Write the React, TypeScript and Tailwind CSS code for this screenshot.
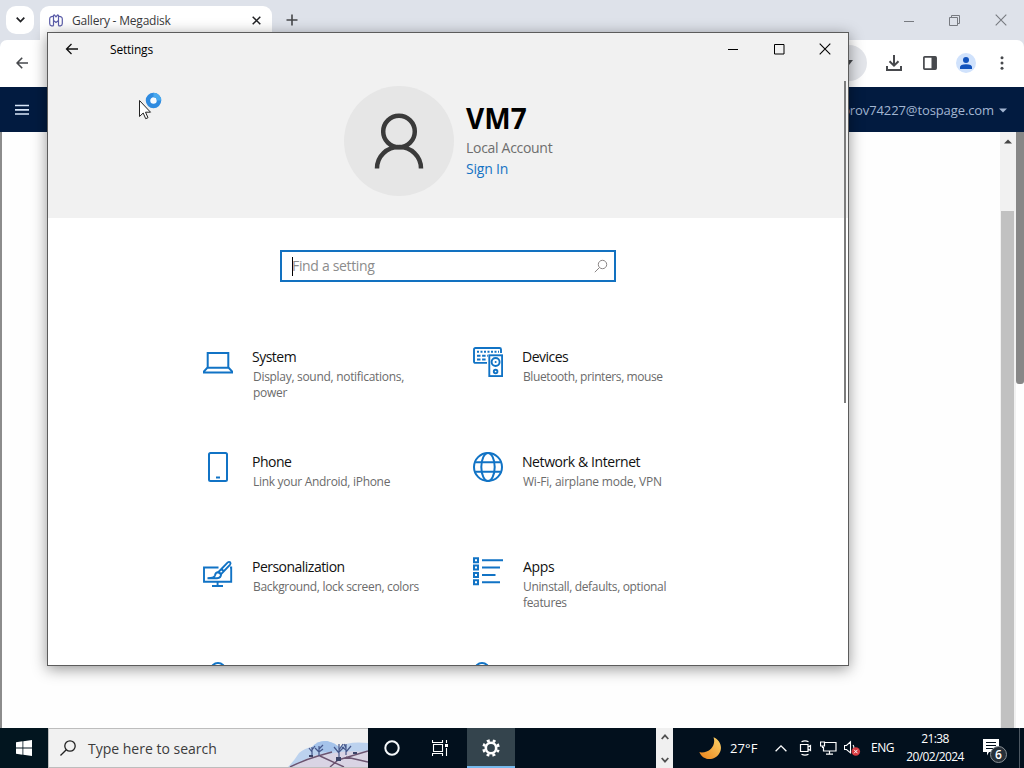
import React from 'react';

interface SettingItem {
    title: string;
    lines: string[];
    icon: React.ReactNode;
    titleClass: string;
    lineClass: string;
}

const Laptop = () => (
    <svg width="30" height="30" viewBox="0 0 30 30" fill="none" stroke="#1173c5" strokeWidth="2">
        <path d="M4.700 20.500V6h20.600v14.500M4.300 20.700h21.400L29 24.300v1.200H1v-1.200z" />
    </svg>
);

const Phone = () => (
    <svg width="30" height="30" viewBox="0 0 30 30" fill="none" stroke="#1173c5" strokeWidth="2">
        <rect x="6" y="1" width="18" height="28" rx="1.500" />
        <path d="M13 25.500h4" />
    </svg>
);

const Devices = () => (
    <svg width="30" height="30" viewBox="0 0 30 30" fill="none" stroke="#1173c5" strokeWidth="1.900">
        <path d="M14 15.900H2.500Q1 15.900 1 14.400V2.500Q1 1 2.500 1H26.500Q28 1 28 2.500V6" />
        <path d="M4 4.800h22" strokeDasharray="2 1.500" />
        <path d="M4 8.800h11M4 12.500h10" strokeDasharray="3.500 1.600" />
        <rect x="16.300" y="8.300" width="12.800" height="20.800" fill="#fff" />
        <circle cx="22.600" cy="15" r="4" />
        <circle cx="22.600" cy="24.500" r="1.800" />
        <circle cx="22.600" cy="15" r="1" fill="#1173c5" stroke="none" />
    </svg>
);

const Globe = () => (
    <svg width="30" height="30" viewBox="0 0 30 30" fill="none" stroke="#1173c5" strokeWidth="2">
        <circle cx="15" cy="15" r="14" />
        <ellipse cx="15" cy="15" rx="6.700" ry="14" />
        <path d="M2.200 10.200h25.600M2.200 19.800h25.600" />
    </svg>
);

const Brush = () => (
    <svg width="30" height="30" viewBox="0 0 30 30" fill="none" stroke="#1173c5" strokeWidth="1.900">
        <path d="M15.500 10.500H1v14.300h27.200V10.500h-1.200M14.600 25v4M9 29h11" />
        <path d="M15.500 15 24.500 5.600Q26 4.300 27.200 5.300 28 6.500 26.900 7.800L18 17.200zM18.500 12l2.500 2.400" />
        <path d="M15.600 15.200Q12.500 15 12 18.400 11.500 21 4.500 21.200H14q4.200-.4 4-4z" />
    </svg>
);

const AppList = () => (
    <svg width="30" height="30" viewBox="0 0 30 30" fill="none" stroke="#1173c5" strokeWidth="2">
        <path d="M1 1.200h4v4H1zM1 8.500h4v4H1zM1 15.900h4v4H1zM1 23.300h4v4H1z" />
        <path d="M9 3.200h21M9 10.500h18M9 17.900h13.500M9 25.300h18" />
    </svg>
);

const items: SettingItem[] = [
    { title: 'System', lines: ['Display, sound, notifications,', 'power'], icon: <Laptop />, titleClass: 'tracking-[-0.5px]', lineClass: 'tracking-[-0.3px]' },
    { title: 'Devices', lines: ['Bluetooth, printers, mouse'], icon: <Devices />, titleClass: 'tracking-[-0.5px]', lineClass: 'tracking-[-0.4px]' },
    { title: 'Phone', lines: ['Link your Android, iPhone'], icon: <Phone />, titleClass: 'tracking-[-0.5px]', lineClass: 'tracking-[-0.3px]' },
    { title: 'Network & Internet', lines: ['Wi-Fi, airplane mode, VPN'], icon: <Globe />, titleClass: 'tracking-[-0.42px]', lineClass: 'tracking-[-0.22px]' },
    { title: 'Personalization', lines: ['Background, lock screen, colors'], icon: <Brush />, titleClass: 'tracking-[-0.52px]', lineClass: 'tracking-[-0.33px]' },
    { title: 'Apps', lines: ['Uninstall, defaults, optional', 'features'], icon: <AppList />, titleClass: 'pl-px tracking-[-0.35px]', lineClass: 'tracking-[-0.34px]' },
];

const SettingCard = ({ item }: { item: SettingItem }) => (
    <div className="flex h-[105px] w-[270px]">
        <div className="w-[49px] shrink-0">{item.icon}</div>
        <div className="whitespace-nowrap">
            <h3 className={`h-[22px] text-[14px] leading-[20px] text-[#111] ${item.titleClass}`}>{item.title}</h3>
            <div className={`pl-px text-[12px] leading-[16px] text-[#6b6b6b] ${item.lineClass}`}>
                {item.lines.map((line) => (
                    <p key={line}>{line}</p>
                ))}
            </div>
        </div>
    </div>
);

const SettingsWindow = () => (
    <div className="absolute left-[47px] top-[32px] flex h-[634px] w-[802px] flex-col overflow-hidden border border-[#5c5c5c] bg-white shadow-[0_3px_14px_rgba(0,0,0,0.42)]">
        <header className="h-[185px] shrink-0 bg-[#f1f1f1]">
            <div className="flex h-[32px] items-center">
                <svg className="ml-[17px]" width="14" height="14" viewBox="0 0 14 14" fill="none" stroke="#111" strokeWidth="1.300">
                    <path d="M13 7H1.500M6.500 2 1.500 7l5 5" />
                </svg>
                <span className="ml-[31px] pt-[2px] text-[12px] tracking-[-0.2px] text-black">Settings</span>
                <div className="ml-auto flex items-center gap-[34px] pr-[17px]">
                    <svg className="mr-px" width="11" height="11" viewBox="0 0 11 11" stroke="#000"><path d="M0 5.500h10" /></svg>
                    <svg width="11" height="11" viewBox="0 0 11 11" fill="none" stroke="#000"><path d="M.5.500h9.500v9.500H.500z" /></svg>
                    <svg width="12" height="12" viewBox="0 0 12 12" stroke="#000" strokeWidth="1.100"><path d="m.700.700 10.600 10.600M11.300.700.700 11.300" /></svg>
                </div>
            </div>
            <div className="ml-[296px] mt-[21px] flex">
                <div className="flex h-[110px] w-[110px] items-center justify-center rounded-full bg-[#e6e6e6]">
                    <svg className="mt-[2px]" width="50" height="58" viewBox="0 0 50 58" fill="none" stroke="#3a3a3a" strokeWidth="4.500">
                        <circle cx="25" cy="18.500" r="15.800" />
                        <path d="M3 55.500C3 43 13 34 25 34s22 9 22 21.500" />
                    </svg>
                </div>
                <div className="ml-[12px] whitespace-nowrap pt-[14px]">
                    <h1 className="h-[37px] text-[28px] font-bold leading-[36px] tracking-[0.1px] text-black">VM7</h1>
                    <p className="h-[21px] text-[14px] leading-[21px] tracking-[-0.3px] text-[#6e6e6e]">Local Account</p>
                    <p className="text-[14px] leading-[21px] tracking-[-0.2px] text-[#1573c4]">Sign In</p>
                </div>
            </div>
        </header>
        <div className="ml-[232px] mt-[32px] flex h-[32px] w-[336px] shrink-0 items-center border-2 border-[#1271c0] pl-[10px] pr-[6px]">
            <span className="-mr-px h-[19px] w-px shrink-0 bg-black" />
            <span className="pb-[2px] text-[14px] tracking-[-0.33px] text-[#8c8c8c]">Find a setting</span>
            <svg className="ml-auto" width="14" height="14" viewBox="0 0 14 14" fill="none" stroke="#8a8585">
                <circle cx="8.500" cy="5.500" r="4.200" />
                <path d="M5.500 8.500.800 13.200" />
            </svg>
        </div>
        <div className="ml-[155px] mt-[65px] grid w-[540px] shrink-0 grid-cols-2">
            {items.map((item) => (
                <SettingCard key={item.title} item={item} />
            ))}
            <svg className="ml-[7px]" width="16" height="16" viewBox="0 0 16 16" fill="none" stroke="#1173c5" strokeWidth="2">
                <circle cx="8" cy="8" r="7" />
            </svg>
            <svg className="ml-[1px]" width="16" height="16" viewBox="0 0 16 16" fill="none" stroke="#1173c5" strokeWidth="2">
                <circle cx="8" cy="8" r="7" />
            </svg>
        </div>
        <div className="absolute left-[796px] top-[48px] h-[322px] w-[2px] bg-[#7c7c7c]" />
    </div>
);

const Pointer = () => (
    <svg className="absolute left-[138px] top-[91px]" width="26" height="30" viewBox="0 0 26 30">
        <path d="M1.500 9.500v16l3.700-3.500 2.500 5.700 2.300-1-2.500-5.500h5z" fill="#fff" stroke="#222" />
        <circle cx="15.500" cy="9.500" r="5.500" fill="#f7fbff" stroke="#2f8be0" strokeWidth="4.500" />
        <path d="M15.500 4a5.500 5.500 0 0 1 5.500 5.500" fill="none" stroke="#49a9ee" strokeWidth="4.500" />
    </svg>
);

const Browser = () => (
    <div className="flex h-[728px] flex-col">
        <div className="flex h-[40px] items-start bg-[#dee2ea]">
            <div className="ml-[6px] mt-[6px] flex h-[28px] w-[28px] items-center justify-center rounded-[10px] bg-white">
                <svg width="9" height="6" viewBox="0 0 9 6" fill="none" stroke="#202124" strokeWidth="1.700"><path d="m.700.700 3.800 3.900L8.300.700" /></svg>
            </div>
            <div className="ml-[6px] mt-[6px] flex h-[34px] w-[232px] items-center rounded-t-[9px] bg-white pb-[5px] pl-[9px] pr-[11px]">
                <svg width="14" height="13" viewBox="0 0 14 13" fill="none" stroke="#5a5ca8" strokeWidth="1.200">
                    <path d="M4.500 11.800V2.200Q4.500.700 5.500 1L7 2.800 8.500 1Q9.500.700 9.500 2.200v9.600M4.500 6.500 7 8.500l2.500-2M4.500 2.500Q.700 2.200.700 5v4.500q0 2 1.800 2.300l2 0M9.500 2.500q3.800-.300 3.800 2.500v4.500q0 2-1.800 2.300h-2" />
                </svg>
                <span className="ml-[9px] pt-px text-[12px] tracking-[-0.2px] text-[#3a3a3c]">Gallery - Megadisk</span>
                <svg className="ml-auto" width="9" height="9" viewBox="0 0 9 9" stroke="#202124" strokeWidth="1.500"><path d="m.700.700 7.600 7.600M8.300.700.700 8.300" /></svg>
            </div>
            <svg className="ml-[14px] mt-[14px]" width="12" height="12" viewBox="0 0 12 12" stroke="#45474a" strokeWidth="1.600"><path d="M6 .500v11M.500 6h11" /></svg>
            <div className="ml-auto mt-[14px] flex items-center gap-[35px] pr-[17px] text-[#777a80]">
                <svg width="10" height="11" viewBox="0 0 10 11" stroke="currentColor"><path d="M0 6.500h10" /></svg>
                <svg width="11" height="11" viewBox="0 0 11 11" fill="none" stroke="currentColor"><path d="M.5 2.500h8v8h-8zM2.500 2.500v-2h8v8h-2" /></svg>
                <svg width="12" height="12" viewBox="0 0 12 12" stroke="currentColor" strokeWidth="1.100"><path d="m.700.700 10.600 10.600M11.300.700.700 11.300" /></svg>
            </div>
        </div>
        <div className="bg-[#dee2ea]">
            <div className="flex h-[47px] items-center rounded-t-[7px] bg-white pb-px pl-[16px] pr-[20px]">
                <svg width="12" height="12" viewBox="0 0 12 12" fill="none" stroke="#47494d" strokeWidth="1.600"><path d="M12 6H1.300M6.200.800 1.100 6l5.100 5.200" /></svg>
                <div className="ml-[60px] flex h-[36px] w-[779px] items-center justify-end rounded-full bg-[#e3e5ea] pb-[2px] pr-[14px]">
                    <svg width="8" height="5" viewBox="0 0 8 5" fill="#47494d"><path d="M0 0h8L4 5z" /></svg>
                </div>
                <svg className="ml-[19px]" width="16" height="16" viewBox="0 0 16 16" fill="none" stroke="#47494d" strokeWidth="2">
                    <path d="M8 0v10.500M3.500 6.200 8 10.700l4.500-4.500M1 11v4h14v-4" />
                </svg>
                <svg className="ml-[21px]" width="14" height="14" viewBox="0 0 14 14">
                    <rect x=".9" y=".9" width="12.200" height="12.200" rx=".8" fill="none" stroke="#47494d" strokeWidth="1.700" />
                    <path d="M8.500 1H13v12H8.500z" fill="#47494d" />
                </svg>
                <div className="ml-[19px] flex h-[20px] w-[20px] items-center justify-center rounded-full bg-[#d0e2fc]">
                    <svg width="12" height="12" viewBox="0 0 12 12" fill="#1253bd">
                        <circle cx="6" cy="3" r="3" />
                        <path d="M0 12v-2q0-2.500 6-2.800 6 .300 6 2.800v2z" />
                    </svg>
                </div>
                <svg className="ml-auto" width="4" height="14" viewBox="0 0 4 14" fill="#47494d">
                    <circle cx="2" cy="1.700" r="1.500" /><circle cx="2" cy="7" r="1.500" /><circle cx="2" cy="12.300" r="1.500" />
                </svg>
            </div>
        </div>
        <nav className="flex h-[45px] items-center justify-between bg-[#021b40] pl-[15px] pr-[17px]">
            <svg width="14" height="11" viewBox="0 0 14 11" stroke="#d8e6f8" strokeWidth="1.700"><path d="M0 1.500h14M0 5.800h14M0 10h14" /></svg>
            <div className="flex items-center pt-[2px]">
                <span className="text-[13px] tracking-[-0.1px] text-[#a3b6d2]">egorov74227@tospage.com</span>
                <svg className="ml-[5px]" width="8" height="5" viewBox="0 0 8 5" fill="#a3b6d2"><path d="M0 .500h8l-4 4z" /></svg>
            </div>
        </nav>
        <main className="flex flex-1 border-l-2 border-[#8c8c8c] bg-[#fefefe]">
            <div className="ml-auto flex w-[16px] flex-col items-center bg-[#f1f1f1]">
                <svg className="mt-[7px]" width="8" height="5" viewBox="0 0 8 5" fill="#444"><path d="M0 4.500h8L4 .500z" /></svg>
                <div className="mr-px mt-[67px] w-[13px] flex-1 bg-[#c1c1c1]" />
            </div>
            <div className="w-[8px]">
                <div className="h-[252px] rounded-b-[3px] bg-[#878787]" />
            </div>
        </main>
    </div>
);

const WinterScene = () => (
    <svg className="ml-auto shrink-0" width="80" height="28" viewBox="0 0 80 28">
        <path d="M0 28Q6 22 11 14q6-5 13-6Q30 1 39 2q8 2 12 6 9-6 29-4v24z" fill="#bcd2ee" />
        <path d="M24 8Q30 1 39 2q8 2 12 6-4 6-14 5-8-1-13-5z" fill="#a5c3ea" />
        <path d="M4 28 20 19q12-5 22-4 14-4 38-2v15z" fill="#d9d4e4" />
        <path d="M2 28Q16 21 30 17l14-4M32 17l24 11M50 21l30-9M50 21 42 28M58 18l22 5" fill="none" stroke="#6b5470" strokeWidth="1.400" />
        <path d="M24 17V8m0 5-3-4m3 2 3-4M31 17V7m0 6-4-4m4 1 4-4m-4 7 4-3M51 18V5m0 9-5-6m5 3 4-6m-4 8 5-5M58 16V5m0 8 5-6m-5 2-2-4m2 6-4-3" fill="none" stroke="#46578a" strokeWidth="1.200" />
        <path d="M21 16h4v2h-4zM48 18h5v4h-5zM65 13h4v2h-4z" fill="#3b4468" />
    </svg>
);

const Taskbar = () => (
    <footer className="flex h-[40px] bg-[#02101d] text-white">
        <div className="flex w-[48px] items-center justify-center bg-[#02151f]">
            <svg width="16" height="16" viewBox="0 0 16 16" fill="#fff"><path d="M0 2.200 6.500 1.300v6.200H0zM7.300 1.200 16 0v7.500H7.300zM0 8.400h6.500v6.300L0 13.800zM7.300 8.400H16V16l-8.700-1.200z" /></svg>
        </div>
        <div className="flex w-[320px] items-end border border-[#bdbdbd] border-r-0 bg-[#f1f1f1]">
            <div className="flex h-full items-center pl-[11px]">
                <svg width="16" height="16" viewBox="0 0 16 16" fill="none" stroke="#222" strokeWidth="1.300"><circle cx="10" cy="6" r="5.200" /><path d="M6.300 9.700.500 15.500" /></svg>
                <span className="ml-[12px] whitespace-nowrap text-[14px] text-[#3c3c3c]">Type here to search</span>
            </div>
            <WinterScene />
        </div>
        <div className="flex w-[48px] items-center justify-center">
            <svg width="16" height="16" viewBox="0 0 16 16" fill="none" stroke="#f5f8fa" strokeWidth="2"><circle cx="8" cy="8" r="6.700" /></svg>
        </div>
        <div className="flex w-[51px] items-center pl-[16px]">
            <svg width="17" height="16" viewBox="0 0 17 16" fill="none" stroke="#fff" strokeWidth="1.100">
                <path d="M.500 0v2.500h10V0M.500 16v-2.500h10V16M1.500 4.500h9v7h-9zM14.500 0v3M14.500 8v8" />
                <path d="M13 4h3v3h-3z" fill="#fff" stroke="none" />
            </svg>
        </div>
        <div className="flex w-[48px] items-center justify-center border-b-2 border-[#76b9ed] bg-[#34444d]">
            <svg className="mt-[2px]" width="18" height="18" viewBox="0 0 18 18" fill="none" stroke="#fff">
                <circle cx="9" cy="9" r="5.200" strokeWidth="2.600" />
                <circle cx="9" cy="9" r="7.500" strokeWidth="2.600" strokeDasharray="2.950 2.940" strokeDashoffset="1.470" transform="rotate(22.500 9 9)" />
            </svg>
        </div>
        <div className="ml-[141px] flex w-[17px] flex-col items-center justify-between bg-[#f0f0f0] pb-[5px] pt-[6px]">
            <svg width="8" height="6" viewBox="0 0 8 6" fill="none" stroke="#505050" strokeWidth="1.800"><path d="m.700 5 3.300-3.600L7.300 5" /></svg>
            <svg width="8" height="6" viewBox="0 0 8 6" fill="none" stroke="#505050" strokeWidth="1.800"><path d="m.700 1 3.300 3.600L7.300 1" /></svg>
        </div>
        <div className="flex flex-1 items-center">
            <svg className="ml-[26px]" width="22" height="23" viewBox="0 0 22 23">
                <defs>
                    <linearGradient id="moon" x1="1" y1="0" x2="0" y2="1">
                        <stop offset="0" stopColor="#f9d36b" />
                        <stop offset="1" stopColor="#ec8118" />
                    </linearGradient>
                </defs>
                <path d="M14.500.300C21 3 24 10 20.500 16 16 24 4.500 24.500.300 15.300c4.500.500 8.500-.300 11.700-3.500 3-3 4-7.500 2.500-11.500z" fill="url(#moon)" />
            </svg>
            <span className="ml-[9px] w-[29px] whitespace-nowrap pt-px text-[13px] tracking-[0.1px]">27°F</span>
            <svg className="ml-[16px]" width="12" height="7" viewBox="0 0 12 7" fill="none" stroke="#fff" strokeWidth="1.300"><path d="m.600 6.300 5.400-5.400 5.400 5.400" /></svg>
            <svg className="ml-[12px]" width="13" height="16" viewBox="0 0 13 16" fill="none" stroke="#fff" strokeWidth="1.200">
                <path d="M1.500 4.500h7.500v7h-7.500zM9 7l2.500-1.500v5L9 9M2.500 1.800Q6 0 9.500 1.800M2.500 14.200Q6 16 9.500 14.200" />
            </svg>
            <svg className="ml-[8px]" width="17" height="14" viewBox="0 0 17 14" fill="none" stroke="#fff" strokeWidth="1.200">
                <path d="M5 1.500h11v8.500H3.500V6M9.500 10v3.500M6 13.200h7M.500 1h4v4h-4zM2.500 5v1.500h1" />
            </svg>
            <div className="ml-[7px] h-[16px] w-[17px]">
                <svg width="17" height="16" viewBox="0 0 17 16">
                    <path d="M.500 5.500h2L6.500 1.800v11L2.500 9.500h-2zM9 5q1.500 2 .5 4" fill="none" stroke="#fff" strokeWidth="1.100" />
                    <circle cx="11.800" cy="11.500" r="4.300" fill="#d8393f" />
                    <path d="m10 9.700 3.600 3.600M13.600 9.700 10 13.300" stroke="#fff" />
                </svg>
            </div>
            <span className="ml-[10px] w-[23px] text-[12px] tracking-[-0.5px]">ENG</span>
            <div className="ml-[10px] w-[62px] whitespace-nowrap text-center text-[12px] leading-[18px] tracking-[-0.6px]">
                <p>21:38</p>
                <p>20/02/2024</p>
            </div>
            <div className="relative ml-[17px] h-[24px] w-[25px]">
                <svg className="mt-[3px]" width="17" height="17" viewBox="0 0 17 17">
                    <path d="M0 0h16v13H6l-2 3.500V13H0z" fill="#fff" />
                    <path d="M3 3.500h10M3 6.500h10M3 9.500h8" stroke="#02101d" strokeWidth="1.200" />
                </svg>
                <span className="absolute left-[7px] top-[10px] flex h-[17px] w-[17px] items-center justify-center rounded-full border border-[#8a9096] bg-[#273039] text-[12px] font-semibold">6</span>
            </div>
            <span className="ml-auto mr-[4px] h-full w-px bg-[#4d5862]" />
        </div>
    </footer>
);

export default function App() {
    return (
        <div className="relative h-[768px] w-[1024px] overflow-hidden bg-white font-['Open_Sans','Noto_Sans',sans-serif]">
            <Browser />
            <Taskbar />
            <SettingsWindow />
            <Pointer />
        </div>
    );
}
